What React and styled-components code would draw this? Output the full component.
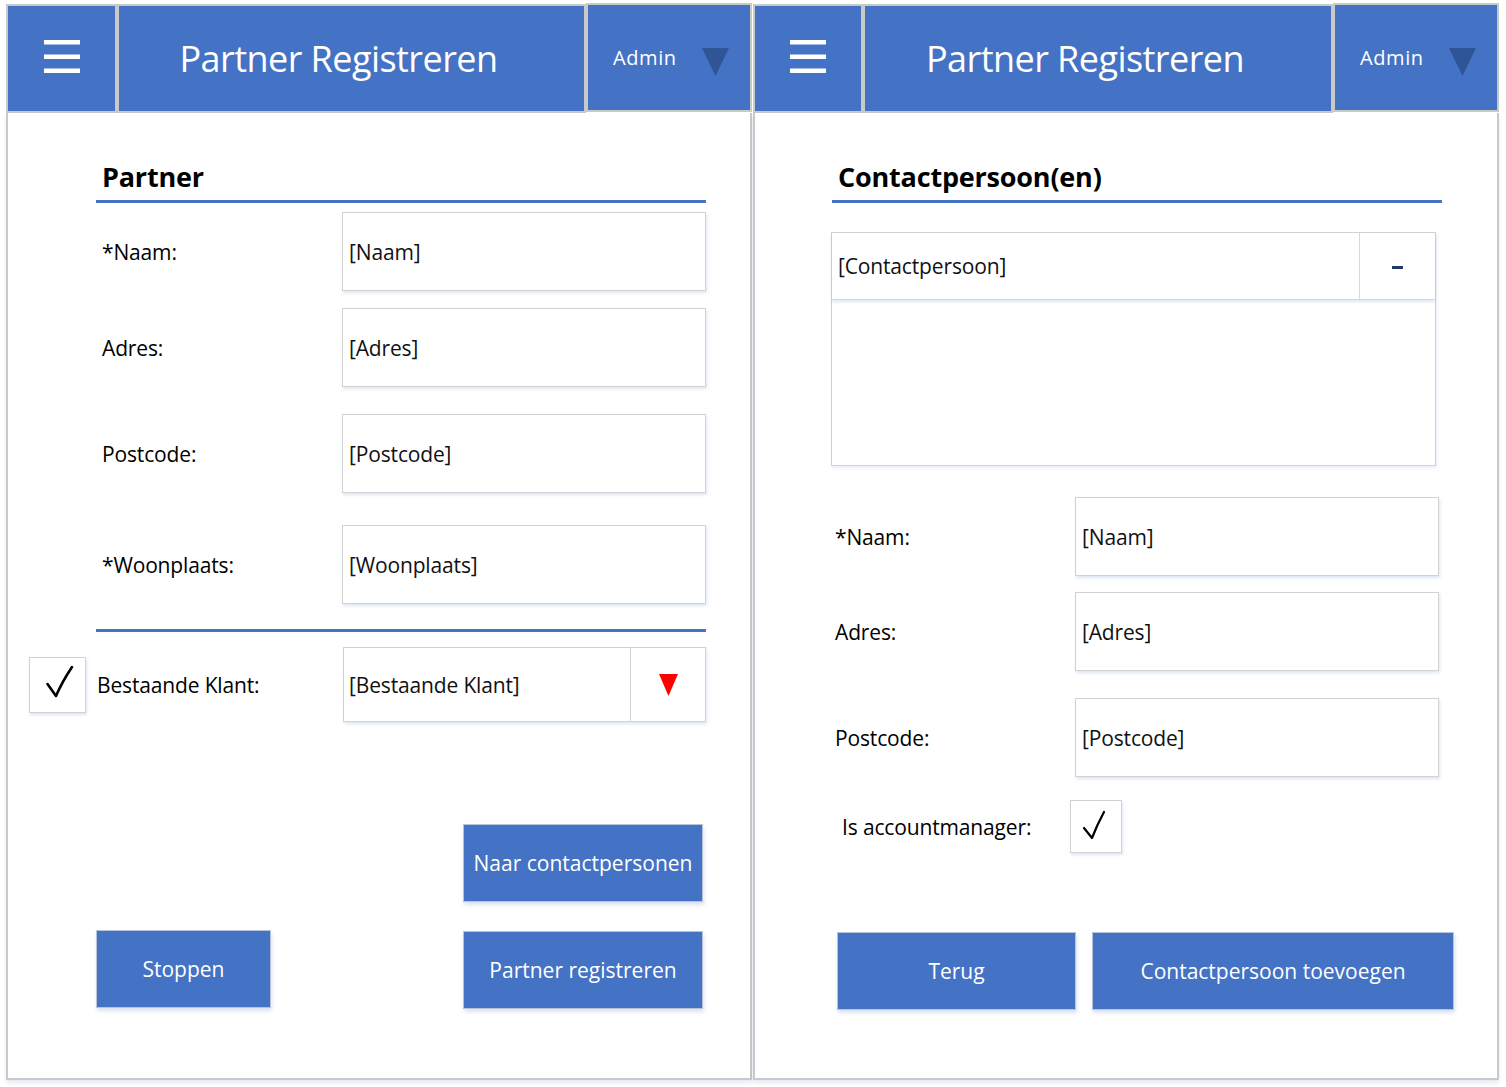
import React from "react";
import styled, { createGlobalStyle } from "styled-components";

const Global = createGlobalStyle`
  html, body { margin: 0; padding: 0; background: #ffffff; }
  body { font-family: "Open Sans", "Noto Sans", sans-serif; color: #111; }
  * { box-sizing: border-box; }
`;

const BLUE = "#4472c4";
const GREY = "#c9c9c9";

const Page = styled.div`
  display: flex;
  gap: 1px;
  padding: 4px 0 0 6px;
  width: 1506px;
  height: 1087px;
  overflow: hidden;
`;

const Screen = styled.section`
  width: 746px;
  height: 1076px;
  display: flex;
  flex-direction: column;
`;

const Header = styled.header`
  display: flex;
  height: 109px;
  flex: none;
`;

const HeadBox = styled.div`
  background: ${BLUE};
  border: 2px solid ${GREY};
  display: flex;
  align-items: center;
  color: #fff;
`;

const MenuBox = styled(HeadBox)`
  width: ${(p) => p.$w}px;
  justify-content: center;
  padding-bottom: 5px;
`;

const TitleBox = styled(HeadBox)`
  flex: 1;
  justify-content: center;
  padding-right: 26px;
  font-size: 36px;
  letter-spacing: -0.55px;
`;

const AdminBox = styled(HeadBox)`
  width: ${(p) => p.$w}px;
  padding: 0 21px 0 25px;
  font-size: 20px;
  letter-spacing: 0.6px;
  margin-top: -1px;
  margin-bottom: 1px;
`;

const AdminArrow = styled.svg`
  margin-left: auto;
  width: 27px;
  height: 28px;
  margin-top: 8px;
`;

const Body = styled.main`
  flex: 1;
  border: 2px solid ${GREY};
  border-top: none;
  display: flex;
  flex-direction: column;
  box-shadow: 0 3px 4px rgba(68, 114, 196, 0.15);
`;

const SectionTitle = styled.h2`
  margin: 46px 0 0 ${(p) => p.$indent}px;
  width: 610px;
  font-size: 27px;
  font-weight: 700;
  line-height: 36px;
  padding: 0 0 5px 6px;
  border-bottom: 3px solid ${BLUE};
  color: #000;
  letter-spacing: -0.2px;
`;

const FieldRow = styled.div`
  display: grid;
  grid-template-columns: ${(p) => p.$label}px 364px;
  align-items: center;
  margin: ${(p) => p.$top}px 0 0 ${(p) => p.$indent}px;
  height: 79px;
`;

const Label = styled.span`
  font-size: 21px;
  padding-left: ${(p) => p.$pad || 0}px;
  color: #000;
  letter-spacing: -0.15px;
`;

const Input = styled.div`
  height: 79px;
  border: 1px solid #d2d2d2;
  box-shadow: 1px 2px 3px rgba(68, 114, 196, 0.18);
  display: flex;
  align-items: center;
  padding-left: 6px;
  font-size: 21px;
  color: #111;
  letter-spacing: -0.15px;
`;

const Divider = styled.hr`
  margin: 25px 0 0 ${(p) => p.$indent}px;
  width: 610px;
  height: 3px;
  border: none;
  background: ${BLUE};
`;

const CheckRow = styled.div`
  display: flex;
  align-items: center;
  margin: ${(p) => p.$top}px 0 0 ${(p) => p.$indent}px;
  height: ${(p) => p.$h}px;
  flex: none;
`;

const CheckBox = styled.div`
  width: ${(p) => p.$w}px;
  height: ${(p) => p.$h}px;
  border: 1px solid #d2d2d2;
  box-shadow: 1px 2px 3px rgba(68, 114, 196, 0.18);
  display: flex;
  flex: none;
  background: #fff;
`;

const RowLabel = styled(Label)`
  width: ${(p) => p.$w}px;
  margin-left: ${(p) => p.$ml || 0}px;
  flex: none;
`;

const Select = styled.div`
  width: 363px;
  height: 75px;
  display: flex;
  border: 1px solid #d2d2d2;
  box-shadow: 1px 2px 3px rgba(68, 114, 196, 0.18);
`;

const SelectText = styled.div`
  flex: 1;
  display: flex;
  align-items: center;
  padding-left: 5px;
  font-size: 21px;
  color: #111;
  letter-spacing: -0.15px;
`;

const SelectButton = styled.div`
  width: 75px;
  border-left: 1px solid #d2d2d2;
  display: flex;
  align-items: center;
  justify-content: center;
  padding-left: 1px;
`;

const ButtonRow = styled.div`
  display: flex;
  justify-content: ${(p) => p.$justify || "flex-start"};
  align-items: flex-start;
  gap: ${(p) => p.$gap || 0}px;
  margin: ${(p) => p.$top}px 0 0 ${(p) => p.$indent}px;
  width: ${(p) => (p.$width ? `${p.$width}px` : "auto")};
  flex: none;
`;

const Button = styled.button`
  width: ${(p) => p.$w}px;
  height: 78px;
  margin-top: ${(p) => p.$dy || 0}px;
  background: ${BLUE};
  border: 1px solid #b7c3d8;
  box-shadow: 1px 3px 4px rgba(68, 114, 196, 0.2);
  color: #fff;
  font-family: "Open Sans", "Noto Sans", sans-serif;
  font-size: 21px;
  letter-spacing: 0;
  padding: 0;
`;

const ListBox = styled.div`
  margin: 29px 0 0 76px;
  width: 605px;
  height: 234px;
  border: 1px solid #d2d2d2;
  box-shadow: 1px 2px 3px rgba(68, 114, 196, 0.12);
  display: flex;
  flex-direction: column;
`;

const ListItem = styled.div`
  height: 67px;
  display: flex;
  border-bottom: 1px solid #d8d8d8;
  box-shadow: 0 2px 3px rgba(68, 114, 196, 0.18);
`;

const ListText = styled.div`
  flex: 1;
  display: flex;
  align-items: center;
  padding-left: 6px;
  font-size: 21px;
  color: #111;
  letter-spacing: -0.15px;
`;

const RemoveButton = styled.div`
  width: 76px;
  border-left: 1px solid #d8d8d8;
  display: flex;
  align-items: center;
  justify-content: center;
  padding-top: 3px;
`;

const Dash = styled.span`
  width: 11px;
  height: 3px;
  background: #1f3864;
`;

function Hamburger() {
  return (
    <svg width="36" height="33" viewBox="0 0 36 33" aria-hidden="true">
      <rect x="0" y="0" width="36" height="4.5" fill="#fff" />
      <rect x="0" y="14.5" width="36" height="4.5" fill="#fff" />
      <rect x="0" y="28.5" width="36" height="4.5" fill="#fff" />
    </svg>
  );
}

function Check({ w, h, d, sw }) {
  return (
    <svg width={w - 2} height={h - 2} viewBox={`1 1 ${w - 2} ${h - 2}`} aria-hidden="true">
      <path d={d} fill="none" stroke="#000" strokeWidth={sw} strokeLinecap="round" strokeLinejoin="round" />
    </svg>
  );
}

function AppHeader({ menuW, adminW }) {
  return (
    <Header>
      <MenuBox $w={menuW}>
        <Hamburger />
      </MenuBox>
      <TitleBox>Partner Registreren</TitleBox>
      <AdminBox $w={adminW}>
        Admin
        <AdminArrow viewBox="0 0 27 28" aria-hidden="true">
          <polygon points="0,0 27,0 13.5,28" fill="#2f5597" />
        </AdminArrow>
      </AdminBox>
    </Header>
  );
}

const partnerFields = [
  { label: "*Naam:", value: "[Naam]", top: 9 },
  { label: "Adres:", value: "[Adres]", top: 17 },
  { label: "Postcode:", value: "[Postcode]", top: 27 },
  { label: "*Woonplaats:", value: "[Woonplaats]", top: 32 },
];

const contactFields = [
  { label: "*Naam:", value: "[Naam]", top: 31 },
  { label: "Adres:", value: "[Adres]", top: 16 },
  { label: "Postcode:", value: "[Postcode]", top: 27 },
];

export default function App() {
  return (
    <>
      <Global />
      <Page>
        <Screen>
          <AppHeader menuW={111} adminW={166} />
          <Body>
            <SectionTitle $indent={88}>Partner</SectionTitle>
            {partnerFields.map((f) => (
              <FieldRow key={f.label} $top={f.top} $indent={88} $label={246}>
                <Label $pad={6}>{f.label}</Label>
                <Input>{f.value}</Input>
              </FieldRow>
            ))}
            <Divider $indent={88} />
            <CheckRow $top={15} $indent={21} $h={75}>
              <CheckBox $w={57} $h={56}>
                <Check w={57} h={56} sw={2.6} d="M18.5 27 L27 39 Q33 25 43 10" />
              </CheckBox>
              <RowLabel $w={246} $ml={11}>Bestaande Klant:</RowLabel>
              <Select>
                <SelectText>[Bestaande Klant]</SelectText>
                <SelectButton>
                  <svg width="19" height="22" viewBox="0 0 19 22" aria-hidden="true">
                    <polygon points="0,0 19,0 9.5,22" fill="#ff0000" />
                  </svg>
                </SelectButton>
              </Select>
            </CheckRow>
            <ButtonRow $top={102} $indent={88} $width={607} $justify="flex-end">
              <Button $w={240}>Naar contactpersonen</Button>
            </ButtonRow>
            <ButtonRow $top={28} $indent={88} $width={607} $justify="space-between">
              <Button $w={175}>Stoppen</Button>
              <Button $w={240} $dy={1}>Partner registreren</Button>
            </ButtonRow>
          </Body>
        </Screen>

        <Screen>
          <AppHeader menuW={110} adminW={166} />
          <Body>
            <SectionTitle $indent={77}>Contactpersoon(en)</SectionTitle>
            <ListBox>
              <ListItem>
                <ListText>[Contactpersoon]</ListText>
                <RemoveButton>
                  <Dash />
                </RemoveButton>
              </ListItem>
            </ListBox>
            {contactFields.map((f) => (
              <FieldRow key={f.label} $top={f.top} $indent={80} $label={240}>
                <Label>{f.label}</Label>
                <Input>{f.value}</Input>
              </FieldRow>
            ))}
            <CheckRow $top={23} $indent={87} $h={53}>
              <RowLabel $w={228}>Is accountmanager:</RowLabel>
              <CheckBox $w={52} $h={53}>
                <Check w={52} h={53} sw={2.2} d="M14 28 L22 38 Q27 25 34 12" />
              </CheckBox>
            </CheckRow>
            <ButtonRow $top={79} $indent={82} $gap={16}>
              <Button $w={239}>Terug</Button>
              <Button $w={362}>Contactpersoon toevoegen</Button>
            </ButtonRow>
          </Body>
        </Screen>
      </Page>
    </>
  );
}
